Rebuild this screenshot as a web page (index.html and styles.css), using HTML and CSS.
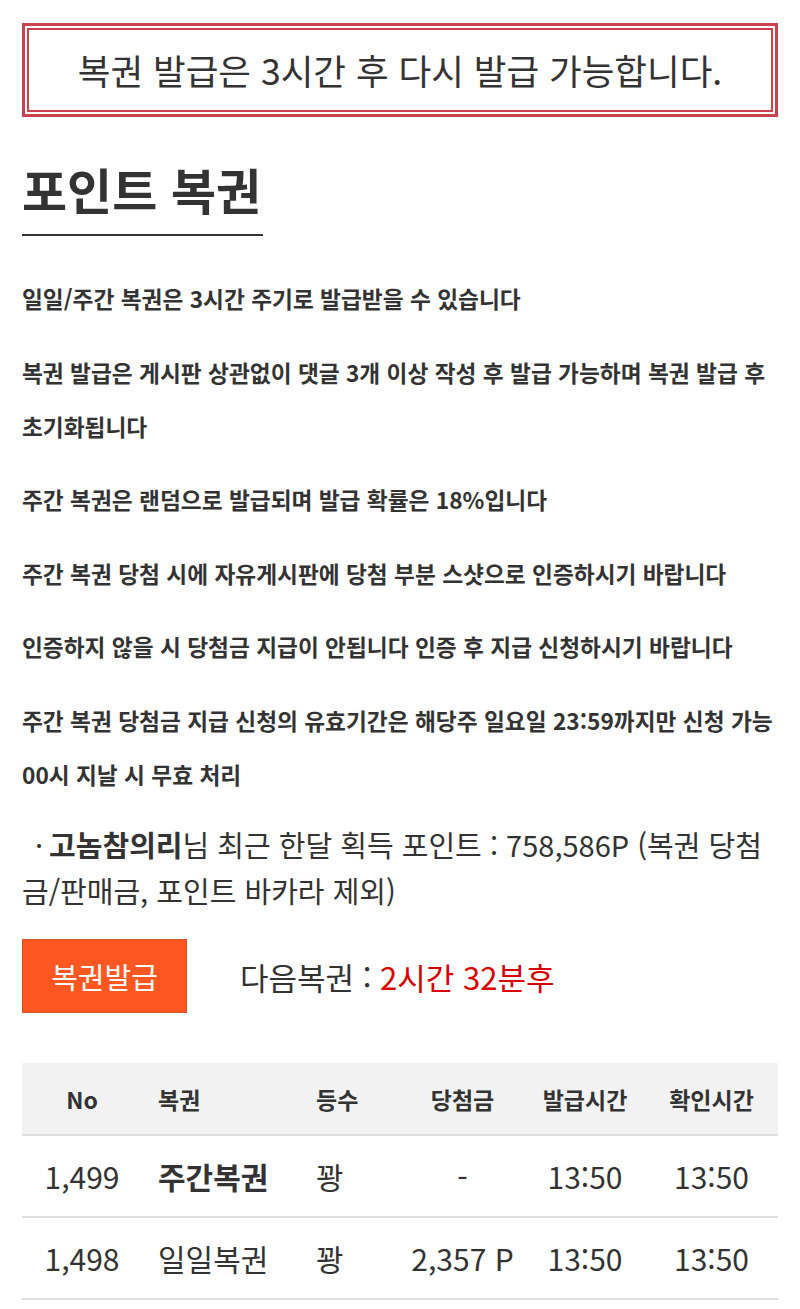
FILE: index.html
```html
<!DOCTYPE html>
<html lang="ko">
<head>
<meta charset="utf-8">
<title>포인트 복권</title>
<link rel="stylesheet" href="styles.css">
</head>
<body>
<div class="page">
  <div class="notice"><div class="notice-inner">복권 발급은 3시간 후 다시 발급 가능합니다.</div></div>

  <h1 class="title">포인트 복권</h1>

  <div class="rules">
    <p>일일/주간 복권은 3시간 주기로 발급받을 수 있습니다</p>
    <p>복권 발급은 게시판 상관없이 댓글 3개 이상 작성 후 발급 가능하며 복권 발급 후 초기화됩니다</p>
    <p>주간 복권은 랜덤으로 발급되며 발급 확률은 18%입니다</p>
    <p>주간 복권 당첨 시에 자유게시판에 당첨 부분 스샷으로 인증하시기 바랍니다</p>
    <p>인증하지 않을 시 당첨금 지급이 안됩니다 인증 후 지급 신청하시기 바랍니다</p>
    <p>주간 복권 당첨금 지급 신청의 유효기간은 해당주 일요일 23:59까지만 신청 가능 00시 지날 시 무효 처리</p>
  </div>

  <div class="points"><span class="dot">·</span><b>고놈참의리</b>님 최근 한달 획득 포인트 : 758,586P (복권 당첨금/판매금, 포인트 바카라 제외)</div>

  <div class="issue-row">
    <button class="issue-btn" type="button">복권발급</button>
    <div class="next">다음복권 : <span class="remain">2시간 32분후</span></div>
  </div>

  <table class="list">
    <colgroup>
      <col class="c1"><col class="c2"><col class="c3"><col class="c4"><col class="c5"><col class="c6">
    </colgroup>
    <thead>
      <tr><th class="center">No</th><th class="left">복권</th><th class="left">등수</th><th class="center">당첨금</th><th class="center">발급시간</th><th class="center">확인시간</th></tr>
    </thead>
    <tbody>
      <tr><td class="center">1,499</td><td class="left strong">주간복권</td><td class="left">꽝</td><td class="center">-</td><td class="center">13:50</td><td class="center">13:50</td></tr>
      <tr><td class="center">1,498</td><td class="left">일일복권</td><td class="left">꽝</td><td class="center">2,357 P</td><td class="center">13:50</td><td class="center">13:50</td></tr>
    </tbody>
  </table>
</div>
</body>
</html>
```

FILE: styles.css
```css
* { box-sizing: border-box; }
html, body { margin: 0; padding: 0; background: #fff; }
body {
  font-family: "Noto Sans CJK KR", "Noto Sans", sans-serif;
  color: #333;
}
.page { padding: 23px 22px 0; }

.notice {
  border: 3px solid #c9424e;
  padding: 2px;
}
.notice-inner {
  border: 2px solid #c9424e;
  height: 84px;
  line-height: 80px;
  text-align: center;
  font-size: 35.5px;
  color: #333;
}

.title {
  display: inline-block;
  margin: 42px 0 0;
  font-size: 49px;
  line-height: 60px;
  font-weight: 700;
  padding: 0 2px 15px 0;
  border-bottom: 2px solid #333;
  color: #333;
}

.rules { margin-top: 36px; }
.rules p {
  margin: 0 0 19.5px;
  font-size: 22.7px;
  line-height: 54px;
  font-weight: 700;
  color: #333;
}

.points {
  margin-top: 12px;
  font-size: 29px;
  line-height: 46px;
  color: #333;
}
.points .dot {
  display: inline-block;
  margin: 0 6px 0 13px;
}
.points b { font-weight: 700; }

.issue-row {
  display: flex;
  align-items: center;
  gap: 53px;
  margin-top: 26px;
}
.issue-btn {
  width: 165px;
  height: 74px;
  background: #ff5722;
  border: 1px solid #d9532a;
  color: #fff;
  font-family: inherit;
  font-size: 29px;
  padding: 0;
}
.next { font-size: 31px; color: #333; }
.remain { color: #d80000; }

.list {
  margin-top: 50px;
  width: 100%;
  border-collapse: collapse;
  table-layout: fixed;
}
.c1 { width: 120px; }
.c2 { width: 158px; }
.c3 { width: 100px; }
.c4 { width: 125px; }
.c5 { width: 120px; }
.c6 { width: 133px; }
.list th {
  background: #f2f2f2;
  height: 72px;
  font-size: 23px;
  font-weight: 700;
  color: #333;
  border-bottom: 2px solid #dedede;
  padding: 0;
}
.list td {
  height: 82px;
  font-size: 30px;
  color: #333;
  border-bottom: 2px solid #dedede;
  padding: 0;
  white-space: nowrap;
}
.list .center { text-align: center; }
.list .left { text-align: left; padding-left: 16px; }
.list .strong { font-weight: 700; }
```
